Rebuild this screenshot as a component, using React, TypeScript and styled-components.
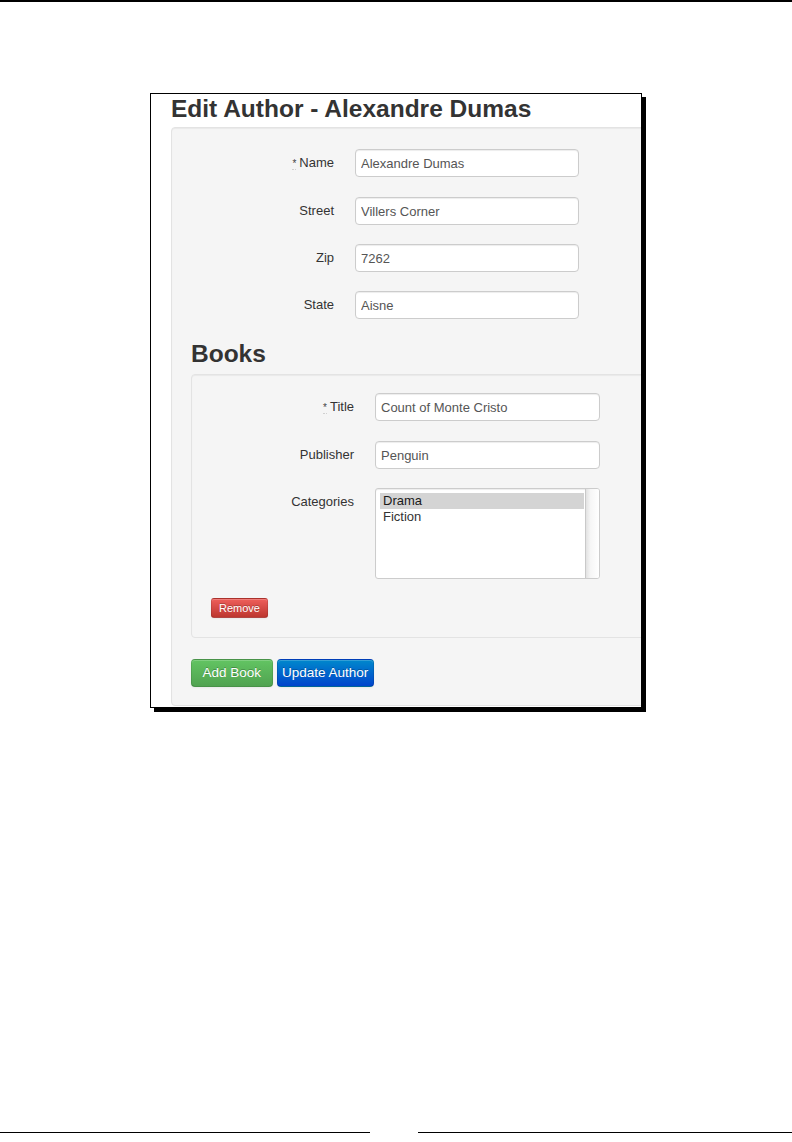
import React from "react";
import styled, { createGlobalStyle, css } from "styled-components";

const GlobalStyle = createGlobalStyle`
  html, body { margin: 0; padding: 0; background: #fff; }
  body { font-family: "Liberation Sans", Arial, Helvetica, sans-serif; }
  *, *::before, *::after { box-sizing: border-box; }
`;

const Page = styled.div`
  width: 792px;
  height: 1142px;
  display: flex;
  flex-direction: column;
  background: #fff;
  overflow: hidden;
`;

const TopRule = styled.div`
  flex: none;
  height: 2px;
  background: #000;
`;

const Figure = styled.div`
  flex: none;
  margin: 91px 0 0 150px;
  width: 492px;
  height: 615px;
  border: 1px solid #000;
  box-shadow: 4px 4px 0 #000;
  background: #fff;
  overflow: hidden;
  padding-left: 20px;
`;

const PageTitle = styled.h3`
  margin: 1px 0 4px 0;
  font-size: 24.5px;
  line-height: 28px;
  font-weight: bold;
  color: #333;
  white-space: nowrap;
`;

const Well = styled.div<{ $width: number; $pad: string }>`
  width: ${(p) => p.$width}px;
  padding: ${(p) => p.$pad};
  background: #f5f5f5;
  border: 1px solid #e3e3e3;
  border-radius: 4px;
  box-shadow: inset 0 1px 1px rgba(0, 0, 0, 0.05);
`;

const Fields = styled.div`
  display: flex;
  flex-direction: column;
  gap: 19px;
`;

const Row = styled.div<{ $label: number; $control: number }>`
  display: grid;
  grid-template-columns: ${(p) => p.$label}px ${(p) => p.$control}px;
  column-gap: 21px;
  align-items: start;
`;

const Label = styled.label`
  text-align: right;
  font-size: 13px;
  line-height: 28px;
  color: #333;
  white-space: nowrap;
`;

const Req = styled.abbr`
  font-size: 10px;
  color: #444;
  text-decoration: none;
  border-bottom: 1px dotted #d0d0d0;
  margin-right: 3px;
  cursor: help;
`;

const TextInput = styled.input`
  display: block;
  width: 100%;
  height: 28px;
  margin: 0;
  padding: 4px 5px;
  border: 1px solid #ccc;
  border-radius: 4px;
  background: #fff;
  font: 13px/18px "Liberation Sans", Arial, Helvetica, sans-serif;
  color: #555;
  box-shadow: inset 0 1px 1px rgba(0, 0, 0, 0.075);
  outline: none;
`;

const SectionTitle = styled.h3`
  margin: 21px 0 6px 0;
  font-size: 24.5px;
  line-height: 28px;
  font-weight: bold;
  color: #333;
`;

const ListBox = styled.div`
  display: flex;
  width: 100%;
  height: 91px;
  border: 1px solid #ccc;
  border-radius: 3px;
  background: #fff;
  box-shadow: inset 0 1px 1px rgba(0, 0, 0, 0.075);
  overflow: hidden;
`;

const OptionList = styled.ul`
  flex: 1;
  margin: 0;
  padding: 4px 1px 4px 4px;
  list-style: none;
  font-size: 13px;
`;

const OptionItem = styled.li<{ $selected?: boolean }>`
  height: 16px;
  line-height: 16px;
  padding-left: 3px;
  color: ${(p) => (p.$selected ? "#1a1a1a" : "#333")};
  background: ${(p) => (p.$selected ? "#d4d4d4" : "transparent")};
`;

const ScrollTrack = styled.div`
  flex: none;
  width: 14px;
  border-left: 1px solid #c9c9c9;
  background: linear-gradient(to right, #e2e2e2 0%, #f6f6f6 35%, #fff 100%);
`;

const variants = {
  danger: css`
    background: linear-gradient(#ee5f5b, #bd362f);
    border-color: rgba(0, 0, 0, 0.1) rgba(0, 0, 0, 0.1) rgba(0, 0, 0, 0.25);
  `,
  success: css`
    background: linear-gradient(#62c462, #51a351);
    border-color: rgba(0, 0, 0, 0.1) rgba(0, 0, 0, 0.1) rgba(0, 0, 0, 0.25);
  `,
  primary: css`
    background: linear-gradient(#0088cc, #0044cc);
    border-color: rgba(0, 0, 0, 0.1) rgba(0, 0, 0, 0.1) rgba(0, 0, 0, 0.25);
  `,
};

const Button = styled.button<{
  $variant: keyof typeof variants;
  $mini?: boolean;
  $padX: number;
}>`
  display: inline-block;
  margin: 0;
  border: 1px solid;
  color: #fff;
  font-family: "Liberation Sans", Arial, Helvetica, sans-serif;
  text-shadow: 0 -1px 0 rgba(0, 0, 0, 0.25);
  box-shadow: inset 0 1px 0 rgba(255, 255, 255, 0.2), 0 1px 2px rgba(0, 0, 0, 0.05);
  cursor: pointer;
  white-space: nowrap;
  ${(p) => variants[p.$variant]}
  ${(p) =>
    p.$mini
      ? css`
          height: 20px;
          padding: 2px ${p.$padX}px;
          font-size: 11px;
          line-height: 14px;
          border-radius: 3px;
        `
      : css`
          height: 28px;
          padding: 4px ${p.$padX}px;
          font-size: 13.5px;
          line-height: 18px;
          border-radius: 4px;
        `}
`;

const RemoveBar = styled.div`
  margin-top: 19px;
  display: flex;
`;

const Actions = styled.div`
  margin-top: 21px;
  display: flex;
  gap: 4px;
`;

const Footer = styled.div`
  margin-top: auto;
  padding-bottom: 9px;
  display: flex;
  justify-content: space-between;
`;

const FootRule = styled.div<{ $w: number }>`
  width: ${(p) => p.$w}px;
  height: 1px;
  background: #000;
`;

const authorFields = [
  { label: "Name", value: "Alexandre Dumas", required: true },
  { label: "Street", value: "Villers Corner" },
  { label: "Zip", value: "7262" },
  { label: "State", value: "Aisne" },
];

export default function App() {
  return (
    <>
      <GlobalStyle />
      <Page>
        <TopRule />
        <Figure>
          <PageTitle>Edit Author - Alexandre Dumas</PageTitle>
          <Well $width={520} $pad="21px 0 18px 0">
            <Fields>
              {authorFields.map((f) => (
                <Row key={f.label} $label={162} $control={224}>
                  <Label>
                    {f.required && <Req title="required">*</Req>}
                    {f.label}
                  </Label>
                  <TextInput readOnly value={f.value} />
                </Row>
              ))}
            </Fields>
            <div style={{ paddingLeft: 19 }}>
              <SectionTitle>Books</SectionTitle>
              <Well $width={480} $pad="18px 0 19px 19px">
                <Fields>
                  <Row $label={143} $control={225}>
                    <Label>
                      <Req title="required">*</Req>Title
                    </Label>
                    <TextInput readOnly value="Count of Monte Cristo" />
                  </Row>
                  <Row $label={143} $control={225}>
                    <Label>Publisher</Label>
                    <TextInput readOnly value="Penguin" />
                  </Row>
                  <Row $label={143} $control={225}>
                    <Label>Categories</Label>
                    <ListBox role="listbox" aria-multiselectable="true">
                      <OptionList>
                        <OptionItem $selected role="option" aria-selected="true">
                          Drama
                        </OptionItem>
                        <OptionItem role="option" aria-selected="false">
                          Fiction
                        </OptionItem>
                      </OptionList>
                      <ScrollTrack />
                    </ListBox>
                  </Row>
                </Fields>
                <RemoveBar>
                  <Button $variant="danger" $mini $padX={7}>
                    Remove
                  </Button>
                </RemoveBar>
              </Well>
              <Actions>
                <Button $variant="success" $padX={10.5}>
                  Add Book
                </Button>
                <Button $variant="primary" $padX={4.5}>
                  Update Author
                </Button>
              </Actions>
            </div>
          </Well>
        </Figure>
        <Footer>
          <FootRule $w={370} />
          <FootRule $w={374} />
        </Footer>
      </Page>
    </>
  );
}
